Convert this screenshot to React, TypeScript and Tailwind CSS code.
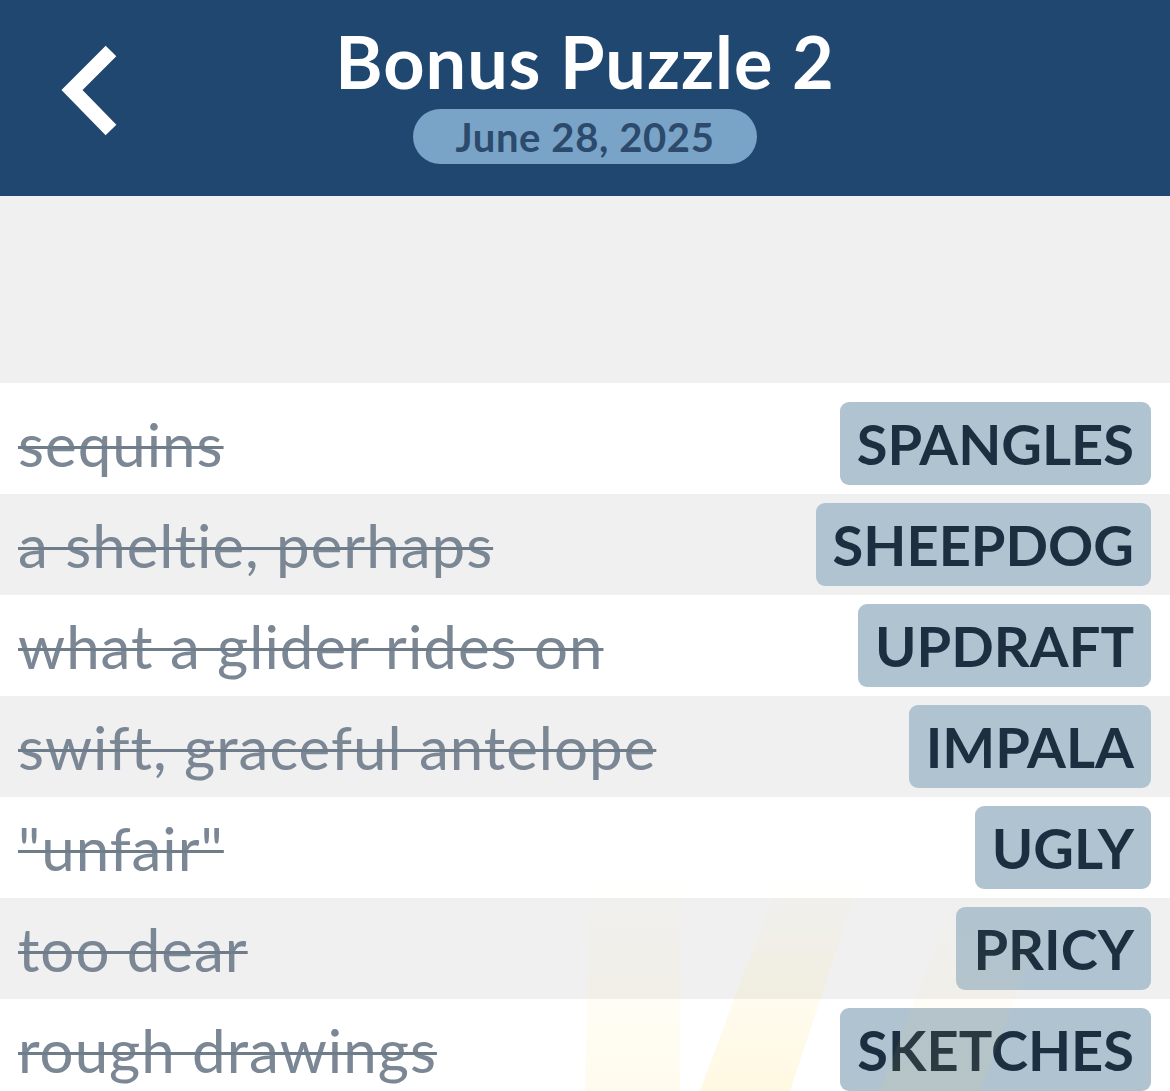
const rows = [
  { clue: "sequins", answer: "SPANGLES" },
  { clue: "a sheltie, perhaps", answer: "SHEEPDOG" },
  { clue: "what a glider rides on", answer: "UPDRAFT" },
  { clue: "swift, graceful antelope", answer: "IMPALA" },
  { clue: "\"unfair\"", answer: "UGLY" },
  { clue: "too dear", answer: "PRICY" },
  { clue: "rough drawings", answer: "SKETCHES" },
];

const font = { fontFamily: "Lato, 'Noto Sans', sans-serif" };

export default function App() {
  return (
    <div className="relative w-[1170px] h-[1091px] overflow-hidden bg-white" style={font}>
      <header className="h-[196px] bg-[#1f4770] flex items-start">
        <div className="w-[150px] pt-[40px] pl-[48px]">
          <svg width="80" height="100" viewBox="48 40 80 100">
            <polyline points="111,51 72,90 111,130" fill="none" stroke="#fff" strokeWidth="15" strokeLinejoin="miter" strokeMiterlimit="4" />
          </svg>
        </div>
        <div className="flex-1 flex flex-col items-center pt-[21px] pr-[150px]">
          <h1 className="text-[72px] leading-[80px] font-bold text-white tracking-[1px]">Bonus Puzzle 2</h1>
          <div className="mt-[8px] h-[55px] w-[344px] rounded-full bg-[#79a3c7] flex items-center justify-center">
            <span className="text-[40px] font-bold text-[#2b4a6c] leading-none tracking-[0.6px]">June 28, 2025</span>
          </div>
        </div>
      </header>
      <div className="h-[187px] bg-[#f0f0f0]" />
      <div className="pt-[10px]">
        {rows.map((r, i) => (
          <div
            key={r.answer}
            className={`h-[101px] flex items-center justify-between pl-[18px] pr-[19px] ${i % 2 === 1 ? "bg-[#f0f0f0]" : "bg-white"}`}
          >
            <span className="text-[60px] text-[#7b8794] tracking-[1px] line-through decoration-[3px] decoration-[#6f7c89] leading-none">
              {r.clue}
            </span>
            <span className="h-[83px] rounded-[9px] bg-[#b0c3d1] px-[17px] flex items-center text-[56px] font-bold text-[#1c2f41] leading-none">
              {r.answer}
            </span>
          </div>
        ))}
      </div>
      <svg className="absolute left-0 top-0 pointer-events-none" width="1170" height="1091">
        <defs>
          <linearGradient id="ray" x1="0" y1="1" x2="0" y2="0">
            <stop offset="0" stopColor="#ffd54a" stopOpacity="0.16" />
            <stop offset="1" stopColor="#ffd54a" stopOpacity="0" />
          </linearGradient>
        </defs>
        <polygon points="585,1091 590,870 680,870 680,1091" fill="url(#ray)" opacity="0.6" />
        <polygon points="700,1091 782,870 863,870 790,1091" fill="url(#ray)" />
        <polygon points="880,1091 960,880 1060,880 980,1091" fill="url(#ray)" opacity="0.5" />
      </svg>
    </div>
  );
}
